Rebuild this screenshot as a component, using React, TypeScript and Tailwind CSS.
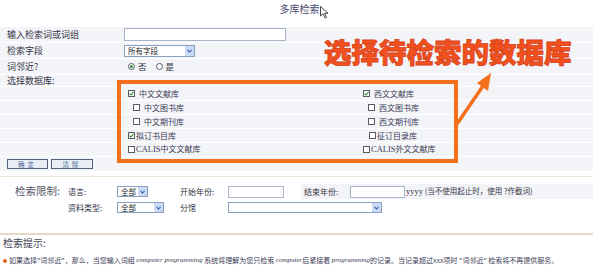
import React from "react";

const F = { fontFamily: '"Noto Sans CJK SC", "Noto Sans", sans-serif' };

function Box({ checked }: { checked?: boolean }) {
  return (
    <span className="inline-flex items-center justify-center w-[7px] h-[7px] border border-[#5a5a6a] bg-white shrink-0">
      {checked && (
        <svg width="5" height="5" viewBox="0 0 5 5">
          <path d="M0.6 2.6 L2 4 L4.5 0.8" stroke="#2f8a2f" strokeWidth="1.1" fill="none" />
        </svg>
      )}
    </span>
  );
}

function Radio({ on }: { on?: boolean }) {
  return (
    <span className="inline-flex items-center justify-center w-[7px] h-[7px] rounded-full border border-[#5a5a6a] bg-white">
      {on && <span className="w-[3px] h-[3px] rounded-full bg-[#2f8a2f]" />}
    </span>
  );
}

function Select({ w, text, h = 11 }: { w: number; text: string; h?: number }) {
  return (
    <div
      className="flex items-center border border-[#8aa0c0] bg-white"
      style={{ width: w, height: h }}
    >
      <span className="flex-1 pl-[3px] text-[7.5px] leading-none text-[#222]">{text}</span>
      <span className="w-[9px] h-full flex items-center justify-center bg-[#c9d9f6]">
        <svg width="5" height="4" viewBox="0 0 5 4">
          <path d="M0.5 0.8 L2.5 3 L4.5 0.8" stroke="#3a5aa8" strokeWidth="1.1" fill="none" />
        </svg>
      </span>
    </div>
  );
}

function Btn({ label, w }: { label: string; w: number }) {
  return (
    <div
      className="h-[10px] flex items-center justify-center border border-[#50607a] bg-[#e9edf5] text-[6.5px] leading-none text-[#4a6a9a] tracking-[3px]"
      style={{ width: w }}
    >
      {label}
    </div>
  );
}

function Cb({ checked, label, indent, pad, serif }: { checked?: boolean; label: string; indent?: boolean; pad?: number; serif?: boolean }) {
  return (
    <div className="flex items-center" style={{ marginLeft: indent ? 5 : 0 }}>
      <Box checked={checked} />
      <span
        className="text-[8px] leading-none text-[#3a3a55]"
        style={{ marginLeft: pad ?? 4 }}
      >
        {serif ? (
          <>
            <span style={{ fontFamily: '"Liberation Serif", serif' }} className="text-[8.5px]">CALIS</span>
            {label}
          </>
        ) : (
          label
        )}
      </span>
    </div>
  );
}

export default function App() {
  const rowCls = "flex items-center border-b border-white";
  return (
    <div className="relative w-[599px] h-[269px] bg-white overflow-hidden text-[#333344]" style={F}>
      {/* title */}
      <div className="h-[27px] flex justify-center pt-[4px]">
        <span className="text-[10px] leading-[10px] text-[#4a4a70]">多库检索</span>
      </div>
      <svg className="absolute left-[320px] top-[6px]" width="9" height="13" viewBox="0 0 9 13">
        <path d="M0.5 0.5 L0.5 10 L3 7.8 L5 12 L6.5 11.3 L4.6 7.3 L8 7.3 Z" fill="white" stroke="#333" strokeWidth="0.9" />
      </svg>

      {/* panel */}
      <div className="w-[593px] bg-[#f3f4f8] text-[9px] leading-none">
        <div className={`${rowCls} h-[16px]`}>
          <span className="w-[124px] pl-[7px]">输入检索词或词组</span>
          <div className="w-[162px] h-[13px] border border-[#a8b4c8] bg-white" />
        </div>
        <div className={`${rowCls} h-[16px]`}>
          <span className="w-[124px] pl-[7px]">检索字段</span>
          <Select w={71} text="所有字段" h={12} />
        </div>
        <div className={`${rowCls} h-[16px]`}>
          <span className="w-[124px] pl-[7px]">词邻近?</span>
          <div className="flex items-center pl-[4px] text-[8.5px]">
            <Radio on />
            <span className="ml-[3px]">否</span>
            <span className="ml-[9px]"><Radio /></span>
            <span className="ml-[3px]">是</span>
          </div>
        </div>
        <div className={`${rowCls} h-[12px]`}>
          <span className="w-[124px] pl-[7px]">选择数据库:</span>
        </div>
        {[
          [<Cb checked label="中文文献库" />, <Cb checked label="西文文献库" />],
          [<Cb indent label="中文图书库" />, <Cb indent label="西文图书库" />],
          [<Cb indent label="中文期刊库" />, <Cb indent label="西文期刊库" />],
          [<Cb checked label="拟订书目库" pad={1} />, <span className="ml-[6px]"><Cb label="征订目录库" pad={1} /></span>],
          [<Cb serif label="中文文献库" pad={1} />, <Cb serif label="外文文献库" pad={1} />],
        ].map((r, i) => (
          <div key={i} className={`${rowCls} h-[14px]`}>
            <span className="w-[128px]" />
            <div className="w-[235px] flex">{r[0]}</div>
            <div className="flex">{r[1]}</div>
          </div>
        ))}
        <div className="flex items-center h-[14px] pl-[7px] gap-[3px]">
          <Btn label="确定" w={41} />
          <Btn label="清除" w={42} />
        </div>
      </div>

      {/* limits */}
      <div className="mt-[5px] h-px bg-[#ece4d6] w-[593px]" />
      <div className="pt-[7px] w-[593px] text-[8px] leading-none">
        <div className="flex items-center h-[15px]">
          <span className="w-[68px] pl-[15px] text-[10.5px] text-[#555566]">检索限制:</span>
          <span className="w-[49px]">语言:</span>
          <Select w={31} text="全部" />
          <span className="w-[48px] ml-[32px]">开始年份:</span>
          <div className="w-[56px] h-[12px] border border-[#a8b4c8] bg-white" />
          <div className="flex-1 self-stretch flex items-center bg-[#f3f4f8] ml-[17px]">
            <span className="w-[49px] pl-[3px]">结束年份:</span>
            <div className="w-[55px] h-[12px] border border-[#a8b4c8] bg-white" />
            <span className="ml-px text-[7.5px]">
              <span style={{ fontFamily: '"Liberation Serif", serif' }} className="text-[8.5px]">yyyy</span> (当不使用起止时，使用 ?作截词)
            </span>
          </div>
        </div>
        <div className="flex items-center h-[15px] mt-px">
          <span className="w-[68px]" />
          <span className="w-[49px]">资料类型:</span>
          <Select w={47} text="全部" />
          <span className="w-[48px] ml-[16px]">分馆</span>
          <Select w={154} text="" />
        </div>
      </div>
      <div className="mt-[18px] h-[2px] bg-[#e6dac6] w-[593px]" />
      <div className="h-[16px] flex items-center pl-[3px] text-[10px] leading-none text-[#444455]">检索提示:</div>
      <div className="mt-[6px] flex items-center pl-[3px] text-[7px] leading-none text-[#3a3a55] whitespace-nowrap">
        <span className="w-[4px] h-[4px] rounded-full bg-[#e0641a] mr-[2px]" />
        如果选择"词邻近"，那么，当您输入词组&nbsp;
        <i style={{ fontFamily: '"Liberation Serif", serif' }}>computer programming</i>&nbsp;系统将理解为您只检索&nbsp;
        <i style={{ fontFamily: '"Liberation Serif", serif' }}>computer</i>后紧接着&nbsp;
        <i style={{ fontFamily: '"Liberation Serif", serif' }}>programming</i>的记录。当记录超过xxx项时 "词邻近" 检索将不再提供服务。
      </div>

      {/* annotation overlays */}
      <div className="absolute left-[117px] top-[80px] w-[341px] h-[83px] border-[4px] border-[#f5701c]" />
      <div
        className="absolute left-[324px] top-[38px] text-[27.5px] leading-none font-black text-[#f2501c] tracking-[0px] [-webkit-text-stroke:0.8px_#d8421a]"
      >
        选择待检索的数据库
      </div>
      <svg className="absolute left-[450px] top-[66px]" width="50" height="64" viewBox="0 0 50 64">
        <line x1="7" y1="58" x2="35" y2="17" stroke="#f5701c" strokeWidth="3.5" />
        <path d="M41 7 L27 17 L38 25 Z" fill="#f5701c" />
      </svg>
    </div>
  );
}
